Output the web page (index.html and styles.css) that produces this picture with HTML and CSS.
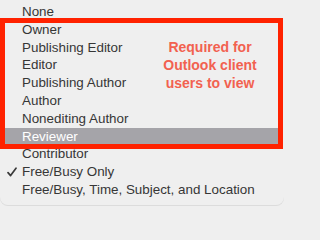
FILE: index.html
```html
<!DOCTYPE html>
<html>
<head>
<meta charset="utf-8">
<link rel="stylesheet" href="styles.css">
</head>
<body>
<div class="menu">
  <ul class="items">
    <li class="item">None</li>
    <li class="item">Owner</li>
    <li class="item">Publishing Editor</li>
    <li class="item">Editor</li>
    <li class="item">Publishing Author</li>
    <li class="item">Author</li>
    <li class="item">Nonediting Author</li>
    <li class="item selected">Reviewer</li>
    <li class="item">Contributor</li>
    <li class="item checked"><svg class="check" width="10" height="10" viewBox="0 0 10 10"><path d="M1 5.6 L3.6 8.6 L9 1.2" fill="none" stroke="#3a3a3a" stroke-width="1.7" stroke-linecap="round" stroke-linejoin="round"/></svg>Free/Busy Only</li>
    <li class="item">Free/Busy, Time, Subject, and Location</li>
  </ul>
  <div class="callout">
    <p class="note">Required for<br>Outlook client<br>users to view</p>
  </div>
</div>
</body>
</html>
```
FILE: styles.css
```css
html, body {
  margin: 0;
  padding: 0;
  background: #efefef;
}
.menu {
  position: relative;
  width: 284px;
  height: 206px;
  overflow: hidden;
  background: #efefef;
  border-radius: 0 0 8px 8px;
  box-shadow: inset 0 -1px 0 #dcdcdc;
  font-family: "Liberation Sans", Arial, sans-serif;
  font-size: 13.4px;
  color: #363636;
}
.items {
  list-style: none;
  margin: 0;
  padding: 3px 0 0 0;
}
.item {
  position: relative;
  height: 17.8px;
  line-height: 17.8px;
  padding-left: 22px;
  white-space: nowrap;
}
.item.selected {
  background: #a5a4a9;
  color: #ffffff;
  margin-right: 4px;
}
.check {
  position: absolute;
  left: 7px;
  top: 4px;
}
.callout {
  position: absolute;
  left: 0;
  top: 18px;
  width: 283px;
  height: 131px;
  box-sizing: border-box;
  border: 5px solid #ff2200;
}
.note {
  position: absolute;
  left: 140px;
  top: 15px;
  width: 130px;
  margin: 0;
  text-align: center;
  font-weight: bold;
  font-size: 14px;
  line-height: 18px;
  color: #f2614f;
}
```
